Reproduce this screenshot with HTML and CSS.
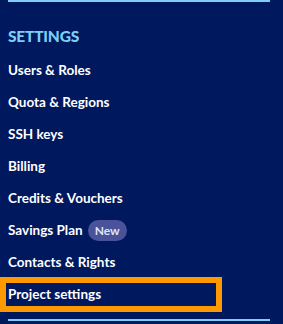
FILE: index.html
```html
<!DOCTYPE html>
<html lang="en">
<head>
  <meta charset="UTF-8" />
  <meta name="viewport" content="width=device-width, initial-scale=1.0" />
  <title>Settings</title>
  <link rel="stylesheet" href="styles.css">
</head>
<body>
  <nav class="sidebar">
    <hr class="divider" />
    <h2 class="section-title">SETTINGS</h2>
    <ul class="menu">
      <li><a href="#">Users &amp; Roles</a></li>
      <li><a href="#">Quota &amp; Regions</a></li>
      <li><a href="#">SSH keys</a></li>
      <li><a href="#">Billing</a></li>
      <li><a href="#">Credits &amp; Vouchers</a></li>
      <li><a href="#">Savings Plan <span class="badge">New</span></a></li>
      <li><a href="#">Contacts &amp; Rights</a></li>
      <li><a href="#" class="focused">Project settings</a></li>
    </ul>
    <hr class="divider" />
  </nav>
</body>
</html>
```
FILE: styles.css
```css
body {
  margin: 0;
  background: #00185e;
  font-family: Lato, 'Noto Sans', sans-serif;
  height: 324px;
  overflow: hidden;
}
.sidebar {
  padding: 0 13px 0 0;
}
.divider {
  border: none;
  border-top: 2px solid #7fcdf5;
  margin: 0 0 0 8px;
}
.section-title {
  color: #7fcdf5;
  font-size: 15.5px;
  font-weight: 900;
  margin: 22px 0 0 8px;
  line-height: 24px;
  letter-spacing: -0.2px;
}
.menu {
  list-style: none;
  margin: 6px 0 0;
  padding: 0;
}
.menu li {
  height: 32px;
  display: flex;
  align-items: center;
}
.menu a {
  color: #fff;
  font-size: 13.5px;
  font-weight: 700;
  text-decoration: none;
  padding: 0 8px;
  display: flex;
  align-items: center;
  gap: 5px;
}
.menu a.focused {
  width: 222px;
  box-sizing: border-box;
  height: 35px;
  border: 6px solid #ff9900;
  padding: 0 2px;
}
.badge {
  background: #4a539a;
  color: #dfe3f5;
  font-size: 12px;
  font-weight: 700;
  border-radius: 11px;
  padding: 2px 7px;
  line-height: 17px;
}
.sidebar .divider:last-child {
  margin-top: 9px;
}
```
